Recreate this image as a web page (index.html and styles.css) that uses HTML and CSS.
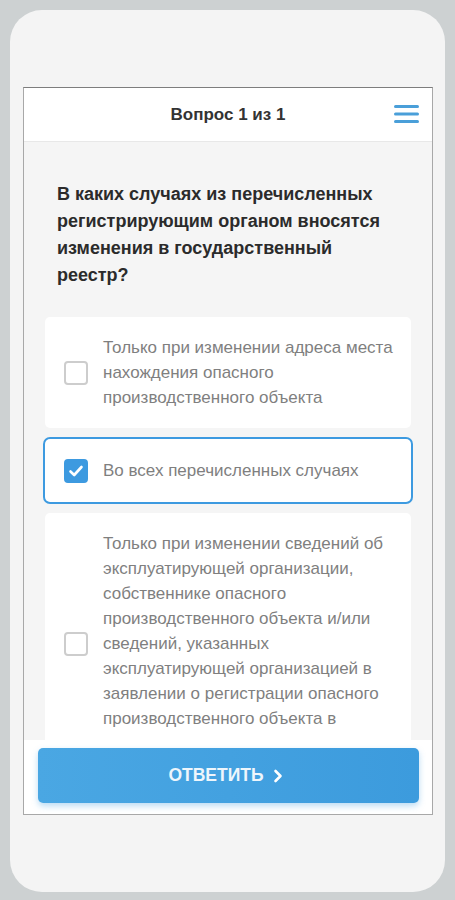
FILE: index.html
```html
<!DOCTYPE html>
<html lang="ru">
<head>
<meta charset="utf-8">
<title>Вопрос 1 из 1</title>
<link rel="stylesheet" href="styles.css">
</head>
<body>
<div class="phone">
  <div class="screen">
    <header class="topbar">
      <h1 class="title">Вопрос 1 из 1</h1>
      <button class="menu" aria-label="Меню">
        <svg width="25" height="20" viewBox="0 0 25 20"><g stroke="#4a9fd9" stroke-width="3" stroke-linecap="round"><line x1="1.5" y1="2.5" x2="23.5" y2="2.5"/><line x1="1.5" y1="10" x2="23.5" y2="10"/><line x1="1.5" y1="17.5" x2="23.5" y2="17.5"/></g></svg>
      </button>
    </header>
    <main class="content">
      <p class="question">В каких случаях из перечисленных регистрирующим органом вносятся изменения в государственный реестр?</p>
      <div class="options">
        <label class="option">
          <span class="box"></span>
          <span class="text">Только при изменении адреса места нахождения опасного производственного объекта</span>
        </label>
        <label class="option selected">
          <span class="box checked">
            <svg width="16" height="14" viewBox="0 0 16 14"><path d="M2.5 7.5 L6.2 11 L13.5 3" fill="none" stroke="#fff" stroke-width="2.6" stroke-linecap="round" stroke-linejoin="round"/></svg>
          </span>
          <span class="text">Во всех перечисленных случаях</span>
        </label>
        <label class="option">
          <span class="box"></span>
          <span class="text">Только при изменении сведений об эксплуатирующей организации, собственнике опасного производственного объекта и/или сведений, указанных эксплуатирующей организацией в заявлении о регистрации опасного производственного объекта в государственном реестре</span>
        </label>
      </div>
    </main>
    <footer class="bottombar">
      <button class="answer">ОТВЕТИТЬ
        <svg width="10" height="14" viewBox="0 0 10 14"><path d="M2.5 2 L7.5 7 L2.5 12" fill="none" stroke="#fff" stroke-width="2.6" stroke-linecap="round" stroke-linejoin="round"/></svg>
      </button>
    </footer>
  </div>
</div>
</body>
</html>
```
FILE: styles.css
```css
* { box-sizing: border-box; }
html, body { margin: 0; padding: 0; }
body {
  background: #cdd1d2;
  padding: 10px;
  font-family: "Liberation Sans", Arial, sans-serif;
  width: 455px;
  height: 900px;
  overflow: hidden;
}
.phone {
  width: 435px;
  height: 882px;
  background: #f4f4f4;
  border-radius: 32px;
  padding: 77px 12px 77px 13px;
}
.screen {
  height: 100%;
  border: 1px solid #a8a8a8;
  border-top-color: #7d7d7d;
  background: #f5f5f5;
  display: flex;
  flex-direction: column;
  overflow: hidden;
}
.topbar {
  height: 54px;
  flex: none;
  background: #fff;
  border-bottom: 1px solid #e8e8e8;
  display: flex;
  align-items: center;
  justify-content: center;
  position: relative;
}
.title {
  margin: 0;
  font-size: 17px;
  font-weight: bold;
  color: #333;
}
.menu {
  position: absolute;
  right: 13px;
  top: 16px;
  border: 0;
  padding: 0;
  background: none;
  line-height: 0;
}
.content {
  flex: 1;
  overflow: hidden;
  padding: 39px 21px 0;
}
.question {
  margin: 0 20px 28px 12px;
  font-size: 18px;
  line-height: 27px;
  font-weight: bold;
  color: #2b2b2b;
}
.options {
  display: flex;
  flex-direction: column;
  gap: 11px;
}
.option {
  display: flex;
  align-items: center;
  gap: 15px;
  background: #fff;
  border-radius: 5px;
  padding: 18px 12px 18px 19px;
}
.option.selected {
  padding-top: 19px;
  padding-bottom: 19px;
  box-shadow: 0 0 0 2px #3d9ae0;
}
.box {
  flex: none;
  width: 24px;
  height: 24px;
  border: 2px solid #cdcdcd;
  border-radius: 4px;
  background: #fff;
  display: flex;
  align-items: center;
  justify-content: center;
}
.box.checked {
  border-color: #3d9ae0;
  background: #3d9ae0;
}
.text {
  font-size: 17px;
  line-height: 25px;
  color: #7f7f7f;
}
.bottombar {
  flex: none;
  height: 74px;
  background: #fff;
  padding: 8px 13px 11px 14px;
}
.answer {
  width: 100%;
  height: 55px;
  border: 0;
  border-radius: 5px;
  background: linear-gradient(90deg, #4aa7e3, #3c9bdd);
  box-shadow: 0 3px 6px rgba(61, 154, 224, 0.35);
  color: #eef6fc;
  font-family: "Liberation Sans", Arial, sans-serif;
  font-size: 17.5px;
  font-weight: bold;
  display: flex;
  align-items: center;
  justify-content: center;
  gap: 9px;
  padding: 0 6px 0 0;
}
```
